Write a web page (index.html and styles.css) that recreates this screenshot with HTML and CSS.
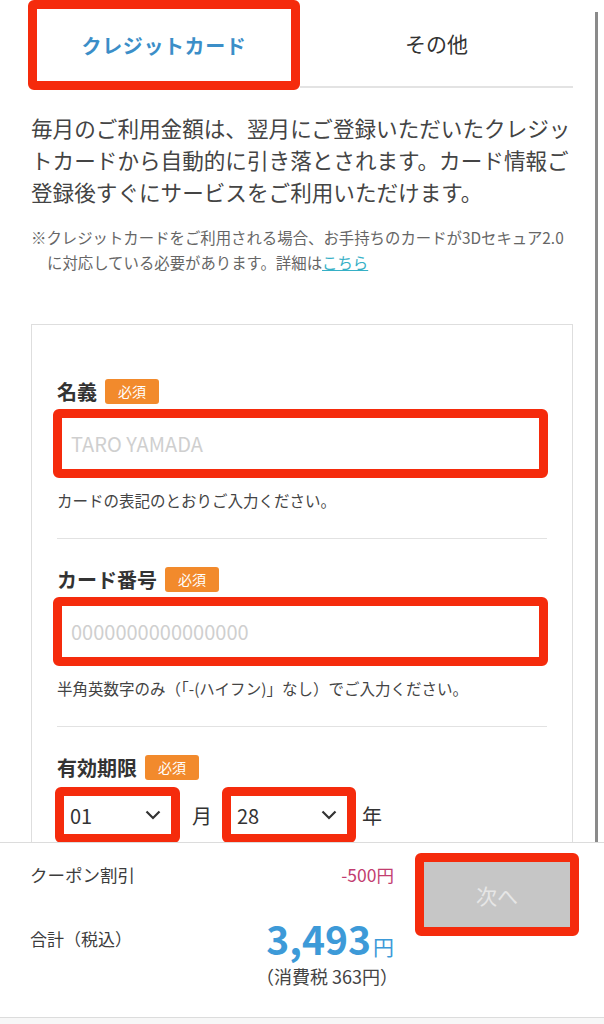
FILE: index.html
```html
<!DOCTYPE html>
<html>
  <head>
    <link rel="stylesheet" href="styles.css">
  </head>
  <body>
    <div class="page">
      <div class="tabs">
        <div class="tab tab-active">クレジットカード</div>
        <div class="tab">その他</div>
      </div>

      <p class="lead">毎月のご利用金額は、翌月にご登録いただいたクレジットカードから自動的に引き落とされます。カード情報ご登録後すぐにサービスをご利用いただけます。</p>
      <p class="note">※クレジットカードをご利用される場合、お手持ちのカードが3Dセキュア2.0に対応している必要があります。詳細は<a class="link" href="#">こちら</a></p>

      <div class="card">
        <div class="field">
          <div class="label">名義<span class="badge">必須</span></div>
          <div class="input mark">TARO YAMADA</div>
          <div class="hint">カードの表記のとおりご入力ください。</div>
        </div>
        <div class="field">
          <div class="label">カード番号<span class="badge">必須</span></div>
          <div class="input mark">0000000000000000</div>
          <div class="hint">半角英数字のみ（「-(ハイフン)」なし）でご入力ください。</div>
        </div>
        <div class="field field-last">
          <div class="label">有効期限<span class="badge">必須</span></div>
          <div class="expiry">
            <div class="select mark select-month">01
              <svg class="chev" width="16" height="10" viewBox="0 0 16 10"><path d="M1.5 1.5 L8 8 L14.5 1.5" fill="none" stroke="#333" stroke-width="2.2"/></svg>
            </div>
            <span class="unit unit-month">月</span>
            <div class="select mark select-year">28
              <svg class="chev" width="16" height="10" viewBox="0 0 16 10"><path d="M1.5 1.5 L8 8 L14.5 1.5" fill="none" stroke="#333" stroke-width="2.2"/></svg>
            </div>
            <span class="unit unit-year">年</span>
          </div>
        </div>
      </div>
    </div>

    <div class="footer">
      <div class="summary">
        <div class="row row-coupon">
          <span>クーポン割引</span>
          <span class="discount">-500円</span>
        </div>
        <div class="row row-total">
          <span>合計（税込）</span>
          <span class="total">3,493<small>円</small></span>
        </div>
        <div class="tax">（消費税 363円）</div>
      </div>
      <div class="next mark"><span>次へ</span></div>
    </div>
  </body>
</html>
```

FILE: styles.css
```css
* {
  box-sizing: border-box;
}
html {
  overflow: hidden;
}
body {
  margin: 0;
  height: 1024px;
  background-color: #f7f7f7;
  font-family: "Noto Sans CJK JP", "Noto Sans", sans-serif;
  color: #3c3c3c;
}
/* the grey bar on the right is the page's scroll indicator */
.page {
  background: linear-gradient(#8a8a8a, #8a8a8a) no-repeat 595px 12px / 3px 830px,
    white;
  height: 1018px;
  padding: 0 31px;
  overflow: hidden;
}

/* red annotation frames */
.mark {
  border: 9px solid #f52b0c;
  border-radius: 6px;
}

.tabs {
  display: flex;
  margin-left: -3px;
}
.tab {
  flex: 1;
  height: 88px;
  display: flex;
  align-items: center;
  justify-content: center;
  font-size: 21px;
  color: #333;
  border-bottom: 2px solid #e3e3e3;
}
.tab-active {
  flex: 0 0 272px;
  height: 90px;
  border: 9px solid #f52b0c;
  border-radius: 6px;
  color: #3b8ec8;
  font-weight: bold;
  font-size: 20px;
  letter-spacing: 0.6px;
}

.lead {
  margin: 22px 0 0;
  font-size: 21.6px;
  line-height: 32px;
  color: #444;
}
.note {
  margin: 17px 0 0;
  padding-left: 16px;
  text-indent: -16px;
  font-size: 15.4px;
  line-height: 25px;
  color: #666;
}
.link {
  color: #36b0c6;
}

.card {
  margin-top: 49px;
  border: 1px solid #dedede;
  padding: 0 25px;
  height: 640px;
}
.field {
  padding: 27px 0 27px;
  border-bottom: 1px solid #e2e2e2;
}
.field:first-child {
  padding-top: 53px;
}
.field-last {
  border-bottom: none;
}
.label {
  display: flex;
  align-items: center;
  gap: 8px;
  height: 26px;
  font-size: 20px;
  font-weight: bold;
  color: #333;
}
.badge {
  background-color: #f28a2c;
  color: #fff;
  font-size: 14px;
  font-weight: normal;
  padding: 2px 13px;
  border-radius: 3px;
  line-height: 21px;
}
.input {
  margin: 5px -1px 0 -4px;
  height: 69px;
  padding-left: 9px;
  display: flex;
  align-items: center;
  font-size: 20px;
  color: #cfcfcf;
  background-color: white;
}
.hint {
  margin-top: 11px;
  font-size: 15.5px;
  line-height: 22px;
  color: #444;
}
.expiry {
  display: flex;
  align-items: center;
  margin: 7px 0 0 -2px;
}
.select {
  height: 56px;
  display: flex;
  align-items: center;
  justify-content: space-between;
  padding: 0 10px 0 6px;
  font-size: 20px;
  color: #333;
}
.select-month {
  width: 125px;
}
.select-year {
  width: 134px;
}
.unit {
  font-size: 20px;
  color: #333;
}
.unit-month {
  margin: 0 10px 0 12px;
}
.unit-year {
  margin-left: 6px;
}

.footer {
  position: fixed;
  top: 842px;
  left: 0;
  right: 0;
  height: 176px;
  background-color: white;
  border-top: 1px solid #dcdcdc;
  border-bottom: 1px solid #dcdcdc;
  display: flex;
  gap: 21px;
  padding: 10px 0 0 30px;
}
.summary {
  width: 364px;
}
.row {
  display: flex;
  justify-content: space-between;
  align-items: center;
}
.row-coupon {
  margin-top: 8px;
  font-size: 17.5px;
  height: 26px;
}
.discount {
  font-size: 17.5px;
  color: #c23d70;
}
.row-total {
  margin-top: 26px;
  font-size: 17px;
  height: 50px;
}
.total {
  font-size: 39px;
  font-weight: bold;
  color: #3d9ad8;
}
.total small {
  font-size: 21px;
  font-weight: normal;
  margin-left: 2px;
}
.tax {
  text-align: right;
  margin-right: -4px;
  font-size: 18px;
  color: #444;
}
.next {
  width: 164px;
  height: 83px;
  background-color: #c6c6c6;
  display: flex;
  align-items: center;
  justify-content: center;
  font-size: 21px;
  color: #e6e6e6;
}
```
